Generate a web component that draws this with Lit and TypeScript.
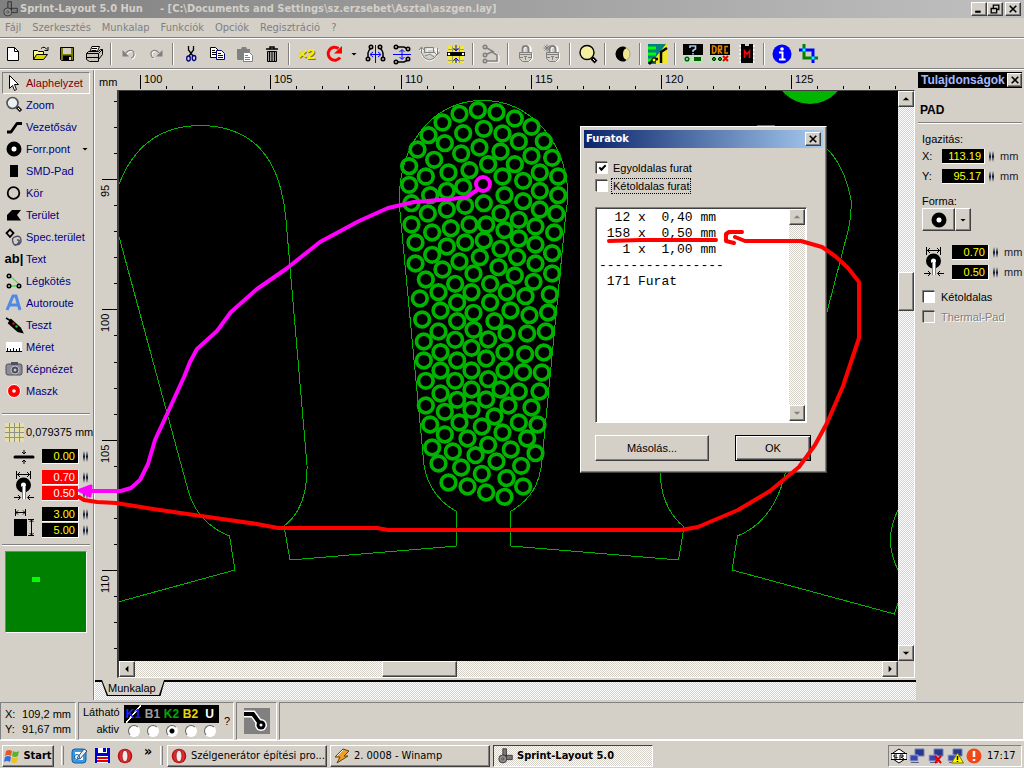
import { LitElement, html, svg, css, SVGTemplateResult } from "lit";
import { customElement } from "lit/decorators.js";

type Icon = SVGTemplateResult;

// Pads of the middle blade, stored as x,y pairs in thirds of a pixel.
const PADS: number[][] = (
  "292,59 237,70 348,65 403,84 186,96 453,109 144,134 248,128 310,115 366,129 415,153 490,152 111,177 193,158 " +
  "297,171 360,183 242,189 453,196 515,202 86,227 161,208 323,221 403,221 478,246 136,258 204,246 267,239 366,258 " +
  "533,258 86,283 428,271 199,301 248,289 478,301 149,314 372,314 533,314 93,338 310,338 428,332 199,357 254,346 " +
  "478,357 142,369 360,369 527,369 415,388 93,402 267,402 317,402 465,408 211,413 155,426 372,419 521,426 415,444 " +
  "105,456 254,456 310,450 199,468 465,462 360,475 155,493 298,500 515,488 410,500 237,513 105,519 465,519 186,537 " +
  "354,530 279,549 515,549 403,555 136,567 459,574 224,580 329,580 174,605 273,605 379,605 508,612 118,624 435,617 " +
  "230,636 329,636 180,660 279,667 390,660 447,674 503,666 125,687 230,692 342,692 174,723 279,718 378,729 440,729 " +
  "496,723 130,753 224,748 323,747 273,772 180,785 372,785 434,791 490,786 130,810 230,810 317,804 180,840 273,840 " +
  "372,840 428,845 484,846 323,866 136,871 224,871 273,897 360,897 415,903 477,903 180,909 230,928 317,927 136,945 " +
  "384,945 453,951 193,964 273,958 342,978 237,996 415,996 149,1002 304,1008 471,1002 366,1026 193,1032 261,1044 " +
  "440,1044 323,1063 155,1071 391,1077 217,1083 285,1094 465,1088 174,1119 348,1113 242,1131 422,1126 304,1150 " +
  "378,1163 204,1176 261,1188 428,1188 317,1206 372,1219"
).split(" ").map((p) => p.split(",").map(Number));

const ic = (body: Icon, size = 22) =>
  html`<svg class="icon" width=${size} height=${size} viewBox="0 0 22 22" aria-hidden="true">${body}</svg>`;

const lock = svg`<path d="M8 10V6q0-2.500 3.500-2.500T15 6v4" fill="none" stroke="#fff" stroke-width="3"/><path d="M7.500 10V6q0-3 3-3t3 3v4" fill="none" stroke="#808080" stroke-width="2"/><path d="M5 10h13v6l-3 3H8l-3-3z" fill="#fff"/><path d="M4.500 9.500h12v6l-3 3h-6l-3-3z" fill="#d4d0c8" stroke="#808080"/><path d="M5 11.500h11M5 14.500h3m5 0h3M10.500 13v4M9 13.500h3" stroke="#808080"/>`;
const dot = (x: number, y: number, c = "#000") => svg`<circle cx=${x} cy=${y} r="1.700" fill="#d4d0c8" stroke=${c} stroke-width="1.600"/>`;

const I: Record<string, Icon> = {
  neu: svg`<path d="M5.500 4.500h7l4 4v9h-11z" fill="#fff" stroke="#000"/><path d="M12.500 4.500v4h4" fill="none" stroke="#000"/>`,
  open: svg`<path d="M4.500 16.500v-9h4l1 1h5v3" fill="#ffff80" stroke="#000"/><path d="M4.500 16.500l3-5h11l-4 5z" fill="#d8d800" stroke="#000"/><path d="M12 5.500q3-3 6 1M19 4v3.500h-3.500" fill="none" stroke="#000"/>`,
  save: svg`<path d="M4.500 4.500h13v13h-12l-1-1z" fill="#808000" stroke="#000"/><path d="M7 5h8v6H7z" fill="#d4d0c8"/><path d="M7 12.500h8.500v5H7z" fill="#000"/><path d="M13 14h2v3h-2z" fill="#d4d0c8"/>`,
  print: svg`<path d="M6.500 9.500l2.500-6h7.500l-2.500 6" fill="#fff" stroke="#000"/><path d="M3.500 10.500l2-2h10l2-2h2v5l-4 5v2h-9l-3-2z" fill="#c8c4bc" stroke="#000"/><path d="M3.500 10.500h12v7M4 14.500h12M9 5.500h5M8.500 7.500h5M15.500 10.500l4-4" fill="none" stroke="#000"/><path d="M11 12h3v1h-3z" fill="#e0e000"/>`,
  undo: svg`<path d="M8.500 11.500q3-4 6-3t2.500 4-3 3.500" fill="none" stroke="#fff" stroke-width="1.200"/><path d="M7.500 10.500q3-4 6-3t2.500 4-3 3.500" fill="none" stroke="#808080" stroke-width="1.200"/><path d="M4.500 7v6.500H11z" fill="#808080"/>`,
  redo: svg`<path d="M15.500 11.500q-3-4-6-3T7 12.500t3 3.500" fill="none" stroke="#fff" stroke-width="1.200"/><path d="M14.500 10.500q-3-4-6-3T6 11.500t3 3.500" fill="none" stroke="#808080" stroke-width="1.200"/><path d="M17.500 7v6.500H11z" fill="#808080"/>`,
  cut: svg`<path d="M8.500 3v4l4.500 6M13.500 3v4L9 13" fill="none" stroke="#000" stroke-width="1.300"/><ellipse cx="8.500" cy="15.500" rx="1.800" ry="2.500" fill="none" stroke="#000080" stroke-width="1.300"/><ellipse cx="14" cy="15" rx="1.800" ry="2.500" fill="none" stroke="#000080" stroke-width="1.300"/>`,
  copy: svg`<path d="M3.500 4.500h5l3 3v7h-8z" fill="#fff" stroke="#000"/><path d="M5 7.500h3m-3 2h4m-4 2h4" stroke="#000"/><path d="M9.500 7.500h5l3 3v6h-8z" fill="#fff" stroke="#000080"/><path d="M11 10.500h3m-3 2h5m-5 2h5" stroke="#000080"/>`,
  paste: svg`<path d="M3 6h4l1-2h4l1 2h3v11H4l-1-1z" fill="#808080"/><path d="M9.500 9.500h6l3 3v6h-9z" fill="#fff" stroke="#808080"/><path d="M11 12.500h3m-3 2h5m-5 2h5" stroke="#808080"/>`,
  trash: svg`<path d="M5 6h12M9 6V4h4v2" fill="none" stroke="#000" stroke-width="1.500"/><path d="M6.500 8.500h9v10h-9z" fill="#a0a0a0" stroke="#000"/><path d="M8.500 9v9m2.500-9v9m2.500-9v9" stroke="#000"/>`,
  rot: svg`<path d="M15.500 5.500a6.500 6.500 0 1 0 1.500 9" fill="none" stroke="#f00" stroke-width="3"/><path d="M11 10.500h8V3z" fill="#f00"/>`,
  mirrorH: svg`<path d="M11.500 2v18" stroke="#00f"/><path d="M7 11.500h9M9 9l-3 2.500 3 2.500M14 9l3 2.500-3 2.500" fill="none" stroke="#00f"/><path d="M7 5q-3 3-3 5v5m12-10q3 3 3 5v5" fill="none" stroke="#000" stroke-width="1.500"/>${dot(7, 4)}${dot(4, 16)}${dot(16, 4)}${dot(19, 16)}`,
  mirrorV: svg`<path d="M2 11.500h18" stroke="#00f"/><path d="M11 7v9M8.500 9L11 6.500 13.500 9M8.500 14l2.500 2.500 2.500-2.500" fill="none" stroke="#00f"/><path d="M5 4h8l4 2M5 19h8l4-2" fill="none" stroke="#000" stroke-width="1.500"/>${dot(5, 4)}${dot(17, 6)}${dot(5, 19)}${dot(17, 16)}`,
  rotGrey: svg`<path d="M8 5h9v5H8zM3 5v7q8 10 15 0V5M1 7l2-3 2 3m11 0l2-3 2 3" fill="none" stroke="#fff" transform="translate(1 1)"/><path d="M6.500 4.500h9v5h-9zM3.500 5v5l3 5 5 2 5-2 3-4V5M1 7l2.500-3L6 7m10 2l3 3 2.500-3M7 13l5-2 4 3" fill="none" stroke="#808080"/>`,
  snap: svg`<path d="M3 3h16v17H3z" fill="#f0e840"/><path d="M3 6.500h16M3 17.500h16M7.500 3v17m7-17v17" stroke="#a0a060"/><path d="M2 11h18" stroke="#000" stroke-width="4"/><circle cx="4" cy="11" r="1.200" fill="#fff"/><circle cx="18" cy="11" r="1.200" fill="#fff"/><path d="M11 2v5M8.500 5L11 8l2.500-3M11 20v-5M8.500 17.500L11 15l2.500 2.500" fill="none" stroke="#00f"/>`,
  conn: svg`<path d="M5 4l8 4 5 4v6H6" fill="none" stroke="#fff" transform="translate(1 1)"/><path d="M5 4l8 4.500L5 12M12 9l5 3v6H6" fill="none" stroke="#808080" stroke-width="1.500"/>${dot(5, 4, "#808080")}${dot(5, 12, "#808080")}${dot(5, 18, "#808080")}`,
  lock,
  unlock: svg`${lock}<path d="M2.500 2.500l5 5m0-5l-5 5M5 1.500v7M1.500 5h7" stroke="#808080"/>`,
  find: svg`<circle cx="10" cy="9.500" r="7" fill="#f4f0a0" stroke="#000" stroke-width="1.400"/><path d="M15 15l4 4" stroke="#000" stroke-width="4"/><path d="M16 16l2 2" stroke="#fff"/>`,
  contrast: svg`<circle cx="11" cy="11" r="7" fill="#f0e890" stroke="#808060" stroke-width=".6"/><path d="M11 3.500a7.500 7.500 0 0 0 0 15q3 0 3-2-3-1-3-5.500t3-5.500q0-2-3-2z" fill="#000"/>`,
  photo: svg`<path d="M1 1h20v20H1z" fill="#f0e820"/><path d="M1 1h18L9 14v7H1z" fill="#008080"/><path d="M1 5h8m-8 6h8m-8 6h5" stroke="#0f0" stroke-width="3"/><path d="M21 3L9 16l1 5h11z" fill="#f0e820"/><path d="M20 5l-6 4v11M2 21l5-5h4" fill="none" stroke="#000" stroke-width="2.500"/><circle cx="7" cy="17" r="2" fill="#ff0" stroke="#000"/>`,
  help: svg`<path d="M1 1h20v11H1z"/><path d="M1 12h20v8H1z" fill="#c0e0c0"/><path d="M8 5V3h5.500v3L11 7.500V9m0 1v1.500" fill="none" stroke="#a6caf0" stroke-width="1.600"/><circle cx="5" cy="16" r="1.800" fill="none" stroke="#006000" stroke-width="1.500"/><path d="M12 14h7v4h-7z" fill="#006000"/>`,
  drc: svg`<path d="M1 1h20v11H1z"/><path d="M1 12h20v8H1z" fill="#c0e0c0"/><path d="M3.500 3v7h2l1.500-1.500v-4L5.500 3zM9.500 11V3h3v3.500h-3l3.500 4M19 3.500h-3v6.500h3" fill="none" stroke="#e08000" stroke-width="1.500"/><circle cx="5" cy="16" r="1.500" fill="#0c0" stroke="#000"/><circle cx="11" cy="16" r="1.500" fill="#0c0" stroke="#000"/><path d="M14 13l5 5m0-5l-5 5" stroke="#d00" stroke-width="2"/>`,
  macro: svg`<path d="M4.500 2v18m13-18v18" stroke="#fff" stroke-width="2" stroke-dasharray="2 2"/><path d="M5 1h4v2h4V1h4v19H5z"/><path d="M8.500 15V8l2.500 3 2.500-3v7" fill="none" stroke="#f00" stroke-width="1.600"/>`,
  info: svg`<circle cx="11" cy="11" r="9.500" fill="#00f"/><circle cx="11" cy="6" r="1.800" fill="#fff"/><path d="M8 9.500h3.500V16M8 16.500h6.500" fill="none" stroke="#fff" stroke-width="2"/>`,
  crop: svg`<path d="M6 1v14h14" fill="none" stroke="#008000" stroke-width="3"/><path d="M1 7h14v13" fill="none" stroke="#00f" stroke-width="3"/><path d="M4.500 5.500h3v3h-3zM13.500 13.500h3v3h-3z" fill="#0ff"/>`,
  // tool column
  arrow: svg`<path d="M6.500 3.500v13l3-3 2 5 2-1-2-5h4z" fill="#fff" stroke="#000"/>`,
  zoom: svg`<circle cx="9.500" cy="9" r="5.500" fill="#e8f0f0" stroke="#505050" stroke-width="1.600"/><path d="M14 13l4 4" stroke="#202020" stroke-width="3.500"/><path d="M15 14l2 2" stroke="#fff"/>`,
  track: svg`<path d="M4 16h4l6-8.500h5" fill="none" stroke="#000" stroke-width="2.800" stroke-linejoin="round"/>`,
  pad: svg`<circle cx="11" cy="11" r="5" fill="#fff" stroke="#000" stroke-width="5"/><circle cx="11" cy="11" r="2.200" fill="#fff"/>`,
  smd: svg`<path d="M7 5h8v12H7z"/>`,
  ring: svg`<circle cx="10.500" cy="11" r="5.800" fill="none" stroke="#000" stroke-width="1.800"/>`,
  area: svg`<path d="M9 6h9l-4 5 4 5.500H4V11z"/>`,
  spec: svg`<path d="M7 3.500L10.500 7 7 11 3.500 7z" fill="#d4d0c8" stroke="#000" stroke-width="1.800"/><path d="M11 18.500q7 1 7-4t-5-4-3 6 5 1-1-3.500" fill="none" stroke="#505068" stroke-width="1.500"/>`,
  lines: svg`<path d="M6 5l10 9M8 16h6" fill="none" stroke="#0d0"/>${dot(6, 6)}${dot(6, 16)}${dot(16, 16)}`,
  auto: svg`<path d="M4 18L10 4h3l4 14M7 13h8" fill="none" stroke="#5088e8" stroke-width="3"/>`,
  test: svg`<path d="M3 4l5 3" stroke="#000" stroke-width="1.500"/><path d="M8 6l9 8 2 4-4-1-9-8z" stroke="#000" stroke-width="2"/><circle cx="10.500" cy="9.500" r="1.200" fill="#f00"/><circle cx="13.500" cy="12.500" r="1.200" fill="#0d0"/>`,
  ruler: svg`<path d="M3 6h16v9H3z" fill="#fff"/><path d="M3 15.500h16M4.500 12v3m3-2v2m3-3v3m3-2v2m3-3v3" stroke="#000"/>`,
  camera: svg`<rect x="3" y="6" width="16" height="11" rx="2" fill="#8c8c94" stroke="#505060"/><path d="M8 4h7v3H8z" fill="#505060"/><circle cx="12" cy="12" r="4" fill="#484860" stroke="#c0c0d0"/><circle cx="12" cy="12" r="1.500" fill="#d0c8a0"/>`,
  mask: svg`<circle cx="11" cy="11" r="6.500" fill="#f00" stroke="#fff"/><circle cx="11" cy="11" r="1.800" fill="#fff"/>`,
  opera: svg`<ellipse cx="11" cy="11" rx="10" ry="10" fill="#b80c10"/><ellipse cx="11" cy="11" rx="8" ry="9" fill="#d83030"/><ellipse cx="11" cy="11" rx="4" ry="8" fill="#f4e8e8" stroke="#901010"/>`,
  lay: svg`<path d="M8 1h5v11H8zM12 10h9v6h-9z" fill="#787878" stroke="#202020"/><circle cx="8" cy="15" r="5.500" fill="#909090" stroke="#202020"/><circle cx="8" cy="15" r="1.500" fill="#d4d0c8" stroke="#202020"/>`,
  close: svg`<path d="M5 5l12 12M17 5L5 17" stroke="#000" stroke-width="3"/>`,
  min: svg`<path d="M4 16h10" stroke="#000" stroke-width="4"/>`,
  restore: svg`<path d="M8 9V4h10v8h-4" fill="none" stroke="#000" stroke-width="2.500"/><path d="M4 10h10v8H4z" fill="none" stroke="#000" stroke-width="2.500"/>`,
  up: svg`<path d="M4 14h14l-7-7z"/>`,
  down: svg`<path d="M4 8h14l-7 7z"/>`,
  left: svg`<path d="M14 4v14l-7-7z"/>`,
  right: svg`<path d="M8 4v14l7-7z"/>`,
};

const padSize = svg`<path d="M2.500 0v8m14-8v8M3 3.500h13M6 1L3.500 3.500 6 6m7-5l2.500 2.500L13 6" fill="none" stroke="#000"/><circle cx="9.500" cy="14" r="5" fill="#fff" stroke="#000" stroke-width="5"/><path d="M8 15h4v13H8z" fill="#fff"/><path d="M8.500 15v13m3-13v13" stroke="#808080"/><path d="M0 26.500h6M4 24l2.500 2.500L4 29M20 26.500h-6M16 24l-2.500 2.500L16 29" fill="none" stroke="#000"/>`;

const TOOLS: [string, string][] = [
  ["arrow", "Alaphelyzet"], ["zoom", "Zoom"], ["track", "Vezetősáv"], ["pad", "Forr.pont"], ["smd", "SMD-Pad"],
  ["ring", "Kör"], ["area", "Terület"], ["spec", "Spec.terület"], ["text", "Text"], ["lines", "Légkötés"],
  ["auto", "Autoroute"], ["test", "Teszt"], ["ruler", "Méret"], ["camera", "Képnézet"], ["mask", "Maszk"],
];

const BAR = "neu open save print | undo redo | cut copy paste trash | x2 rot v mirrorH mirrorV rotGrey snap | conn | lock unlock | find | contrast | photo | help drc macro | info crop".split(" ");

const HOLES = `  12 x  0,40 mm
 158 x  0,50 mm
   1 x  1,00 mm
----------------
 171 Furat`;

@customElement("app-root")
export class AppRoot extends LitElement {
  static styles = css`
    :host { display: flex; flex-direction: column; position: relative; min-height: 100vh; overflow: hidden; box-sizing: border-box; background: #d4d0c8; color: #000; font: 11px/14px "Liberation Sans", Arial, sans-serif; }
    *, *::before, *::after { box-sizing: border-box; }
    button, input, textarea { font: inherit; color: inherit; margin: 0; padding: 0; border-radius: 0; outline: 0; }
    button { border: 0; background: none; display: flex; align-items: center; justify-content: center; white-space: nowrap; }
    a { color: inherit; text-decoration: none; }
    svg { display: block; flex: none; }
    .tahoma { font-family: "DejaVu Sans Condensed", "DejaVu Sans", sans-serif; }
    .raised { background: #d4d0c8; border: 1px solid; border-color: #fff #404040 #404040 #fff; box-shadow: inset -1px -1px #808080; }
    .dither { background: repeating-conic-gradient(#fff 0 25%, #d4d0c8 0 50%) 0 0 / 2px 2px; }
    .fill { flex: 1; }

    .title { display: flex; align-items: center; height: 18px; padding: 0 3px 0 2px; background: linear-gradient(90deg, #808080, #c0c0c0); color: #d4d0c8; font-weight: bold; white-space: pre; }
    .title .name { margin-left: 2px; flex: 1; }
    .winbtn { width: 16px; height: 14px; }
    .winbtn + .winbtn + .winbtn { margin-left: 2px; }
    .menu { display: flex; height: 20px; align-items: center; padding: 0 5px; gap: 11px; color: #808080; border-bottom: 1px solid #808080; }
    .toolbar { display: flex; align-items: center; gap: 2px; height: 31px; border-top: 1px solid #fff; border-bottom: 1px solid #808080; }
    .toolbar button { width: 25px; height: 26px; }
    .toolbar .drop { width: 12px; }
    .x2 { color: #f4f000; font: bold 15px/20px "Liberation Sans", sans-serif; text-shadow: 1px 1px #807000; }
    .sep { width: 6px; height: 22px; display: flex; justify-content: center; }
    .sep::before { content: ""; width: 2px; border-left: 1px solid #808080; border-right: 1px solid #fff; }

    .main { display: flex; flex: 1; border-top: 1px solid #fff; }
    .side { width: 94px; padding: 2px 3px 0 2px; border-right: 1px solid #808080; display: flex; flex-direction: column; }
    .tool { width: 88px; height: 22px; justify-content: flex-start; color: #000080; border: 1px solid transparent; }
    .tool .name { margin-left: 1px; }
    .tool .more { margin-left: auto; }
    .tool .ab { width: 22px; font-weight: bold; font-size: 13px; color: #000; }
    .tool.on { color: #800000; border-color: #808080 #fff #fff #808080; }
    .rule { height: 2px; border-top: 1px solid #808080; border-bottom: 1px solid #fff; flex: none; }
    .side .rule:first-of-type { margin-top: 11px; }
    .gridrow { display: flex; align-items: center; gap: 2px; height: 34px; padding-left: 3px; white-space: nowrap; }
    .params { display: flex; gap: 5px; align-items: center; padding-left: 8px; margin-bottom: 6px; }
    .params svg { width: 27px; }
    .stack { display: flex; flex-direction: column; gap: 1px; }
    .field { display: flex; align-items: center; gap: 4px; }
    .num { width: 37px; height: 15px; padding: 0 3px; border: 0; border-right: 1px solid #fff; border-bottom: 1px solid #fff; background: #000; color: #ff0; text-align: right; }
    .num.hot { background: #f00; color: #fff; }
    .num.wide { width: 43px; }
    .spin { width: 5px; height: 11px; background: linear-gradient(90deg, transparent 40%, #d4d0c8 0 60%, transparent 0), linear-gradient(#d4d0c8, #101830, #d4d0c8); }
    .overview { width: 82px; height: 82px; margin: 5px 0 0 3px; background: #008000; border: 1px solid; border-color: #808080 #fff #fff #808080; }

    .work { flex: 1; min-width: 0; display: grid; grid-template-columns: 22px minmax(0, 1fr); grid-template-rows: 20px minmax(0, 1fr) auto; border-left: 1px solid #fff; }
    .unit { padding: 5px 0 0 4px; }
    .top, .vert { overflow: hidden; }
    .top svg, .vert svg, .board svg { width: 100%; height: 100%; }
    .canvasbox { display: grid; grid-template-columns: minmax(0, 1fr) 16px; grid-template-rows: minmax(0, 1fr) 16px; border: 1px solid; border-color: #404040 #fff #fff #404040; margin: 0 1px 2px 0; border-left-width: 2px; }
    .board { background: #000; overflow: hidden; }
    .vscroll, .hscroll { display: flex; }
    .vscroll { flex-direction: column; }
    .sb { width: 16px; height: 16px; flex: none; }
    .vthumb { height: 39px; }
    .hthumb { width: 75px; }
    .tabs { grid-column: 1 / -1; height: 20px; border-top: 2px solid #000; padding-left: 6px; }
    .tab { width: 64px; height: 16px; margin-top: -2px; background: #000; clip-path: polygon(0 0, 100% 0, 93% 100%, 9% 100%); }
    .tab span { display: block; height: 15px; padding-left: 7px; line-height: 16px; background: #d4d0c8; clip-path: polygon(1px 0, 63px 0, 58px 100%, 7px 100%); }

    .props { width: 108px; padding: 2px 2px 0; }
    .props header { display: flex; align-items: center; height: 16px; background: #000; color: #a6b8ff; padding-left: 3px; font-size: 12px; font-weight: bold; justify-content: space-between; }
    .props .winbtn { width: 15px; }
    .props h2 { margin: 14px 0 4px 2px; font-size: 12px; line-height: 16px; }
    .props .body { padding: 8px 0 0 4px; display: flex; flex-direction: column; }
    .props .row { display: flex; align-items: center; height: 20px; gap: 4px; }
    .props .row label { width: 16px; flex: none; }
    .props .mm { margin-left: 2px; color: #202030; }
    .props .lead { height: 14px; }
    .props .forma { margin-top: 8px; }
    .combo { display: flex; margin-bottom: 11px; }
    .combo button { height: 23px; width: 33px; }
    .combo .dd { width: 16px; }
    .sizes { display: flex; gap: 8px; align-items: center; }
    .check { display: flex; align-items: center; gap: 6px; height: 20px; white-space: nowrap; }
    .check input { appearance: none; width: 12px; height: 12px; flex: none; background: #fff; border: 1px solid; border-color: #404040 #fff #fff #404040; box-shadow: -1px -1px #808080; margin-left: 1px; display: grid; place-content: center; }
    .check input:checked::before { content: ""; width: 7px; height: 4px; border: solid #000; border-width: 0 0 2px 2px; transform: translateY(-1px) rotate(-45deg); }
    .props .first { margin-top: 5px; }
    .off { color: #808080; text-shadow: 1px 1px #fff; }
    .check.off input { background: #d4d0c8; }

    .status { display: flex; gap: 2px; height: 38px; margin-top: 2px; }
    .cell { border: 1px solid; border-color: #808080 #fff #fff #808080; }
    .pos { width: 76px; padding: 4px; display: grid; grid-template-columns: 14px 1fr; line-height: 15px; text-align: right; }
    .pos span:nth-child(odd) { text-align: left; }
    .layers { width: 156px; display: flex; align-items: center; gap: 5px; padding-left: 4px; }
    .caps { width: 36px; text-align: right; line-height: 17px; }
    .lay { display: grid; grid-template-columns: repeat(5, 19px); justify-items: center; }
    .names { background: #000; height: 18px; font: bold 12px/18px "Liberation Sans", sans-serif; }
    .names .k1 { background: linear-gradient(to top left, transparent 46%, #fff 47% 53%, transparent 54%); }
    .k1 { color: #2020ff; } .b1 { color: #a0a0a0; } .k2 { color: #00a800; } .b2 { color: #e8d800; } .u { color: #fff; }
    .lay input { appearance: none; width: 12px; height: 12px; margin-top: 2px; border-radius: 50%; border: 1px solid; border-color: #606060 #fff #fff #606060; background: #fff; }
    .lay input:checked { background: radial-gradient(circle, #000 2px, #fff 3px); }
    .via { width: 41px; display: flex; align-items: center; justify-content: center; }

    .taskbar { display: flex; align-items: center; height: 28px; padding: 2px 2px 0; border-top: 1px solid #fff; }
    .start { width: 52px; height: 22px; font-weight: bold; gap: 3px; }
    .grip { width: 3px; height: 19px; border-left: 1px solid #fff; border-right: 1px solid #808080; margin: 0 7px; }
    .quick { display: flex; gap: 6px; align-items: center; }
    .chev { font-size: 14px; font-weight: bold; line-height: 16px; width: 20px; padding-left: 11px; align-self: flex-start; }
    .chev + .grip { margin-right: 4px; }
    .tasks { display: flex; gap: 3px; flex: 1; }
    .task { width: 160px; height: 22px; justify-content: flex-start; padding: 0 3px; gap: 4px; overflow: hidden; }
    .task.active { border: 1px solid; border-color: #404040 #fff #fff #404040; font-weight: bold; }
    .tray { display: flex; align-items: center; gap: 2px; width: 134px; height: 22px; padding: 0 2px; }
    .tray time { margin-left: 3px; }

    .dialog { position: absolute; left: 580px; top: 126px; width: 247px; padding: 3px; }
    .dialog header { display: flex; align-items: center; height: 18px; padding: 0 2px; background: linear-gradient(90deg, #0a246a, #a6caf0); color: #fff; font-weight: bold; justify-content: space-between; }
    .dialog .in { padding: 11px 12px 8px 11px; }
    .dialog .check { height: 18px; gap: 3px; }
    .dialog .check span { padding: 0 1px; line-height: 14px; border: 1px solid transparent; }
    .dialog .check .focus { border: 1px dotted #000; }
    .memo { display: flex; width: 212px; height: 216px; margin: 12px 0 12px; background: #fff; border: 1px solid; border-color: #808080 #fff #fff #808080; box-shadow: inset 1px 1px #404040; padding: 1px; }
    .memo textarea { flex: 1; min-width: 0; border: 0; background: none; resize: none; overflow: hidden; padding: 1px 2px; font: 13px/16px "Liberation Mono", "Courier New", monospace; white-space: pre; }
    .memo .vscroll { width: 16px; }
    .memo svg { fill: #808080; }
    .actions { display: flex; justify-content: space-between; }
    .actions button { height: 26px; width: 114px; }
    .actions .ok { width: 76px; border-color: #000; box-shadow: inset 1px 1px #fff, inset -1px -1px #404040, inset -2px -2px #808080; }
    .ink { position: absolute; left: 0; top: 0; width: 100%; height: 100%; pointer-events: none; fill: none; stroke-linejoin: round; stroke-linecap: round; }
    .scale { font: 11px "Liberation Sans", Arial, sans-serif; }
  `;

  private num(id: string, label: string, value: string, extra = "") {
    return html`<span class="field"><input class="num ${extra}" id=${id} aria-label=${label} .value=${value} /><span class="spin"></span></span>`;
  }

  private ticks(start: number, count: number, majorAt: number, vertical: boolean) {
    return Array.from({ length: count }, (_, i) => {
      const p = start + Math.round(i * 26.05);
      const major = (i - majorAt) % 5 === 0;
      return vertical
        ? svg`<path d="M${major ? 7 : 19} ${p + 0.5}H22" stroke="#000"/>`
        : svg`<path d="M${p + 0.5} ${major ? 5 : 16}V19" stroke="#000"/>`;
    });
  }

  private barItem(name: string) {
    if (name === "|") return html`<span class="sep"></span>`;
    if (name === "v") return html`<button class="drop" aria-label="Forgatás szöge">${ic(I.down, 8)}</button>`;
    if (name === "x2") return html`<button><span class="x2">×2</span></button>`;
    return html`<button aria-label=${name}>${ic(I[name])}</button>`;
  }

  private board() {
    return html`<svg aria-label="Munkalap"><g transform="translate(-119 -91)">
      <g fill="none" stroke="#00b400" stroke-width="1" shape-rendering="crispEdges">
        <path d="M118 187Q140 126 200 125.500Q265 126 281 190Q285 205 286 220L307 465Q308 508 284 526L290 560L456.500 546V511.500C436 500 427 484 424 465L400 212C394 150 430 100 483 100.500C540 100 576 160 566 212L542 460C540 485 530 500 510.500 511.500V546L678.500 560L684 527Q658 505 660.500 465L682 220Q690 126 767 125.500Q838 128 851 200Q852 215 848 231L784 478Q772 522 737.500 536L732 570L894.500 614L899 600"/>
        <path d="M118 233L188 490Q197 523 229.500 536L235 570L118 602M899 508Q882 540 899 572"/>
      </g>
      <circle cx="810" cy="68" r="36" fill="#00b400"/>
      <g transform="translate(380.500 90.500) scale(.3333)" fill="none" stroke="#00b400" stroke-width="11">
        ${PADS.map(([x, y]) => svg`<circle cx=${x} cy=${y} r="22"/>`)}
      </g>
    </g></svg>`;
  }

  render() {
    const h = [100, 105, 110, 115, 120, 125];
    const v = [95, 100, 105, 110];
    return html`
      <header class="title tahoma">
        ${ic(I.lay, 16)}<span class="name">Sprint-Layout 5.0 Hun     - [C:\\Documents and Settings\\sz.erzsebet\\Asztal\\aszgen.lay]</span>
        <button class="winbtn raised" aria-label="Kis méret">${ic(I.min, 12)}</button>
        <button class="winbtn raised" aria-label="Előző méret">${ic(I.restore, 12)}</button>
        <button class="winbtn raised" aria-label="Bezárás">${ic(I.close, 12)}</button>
      </header>
      <nav class="menu tahoma">
        ${["Fájl", "Szerkesztés", "Munkalap", "Funkciók", "Opciók", "Regisztráció", "?"].map((m) => html`<a href="#">${m}</a>`)}
      </nav>
      <div class="toolbar">${BAR.map((n) => this.barItem(n))}</div>

      <div class="main">
        <aside class="side">
          ${TOOLS.map(([k, label], i) => html`<button class="tool ${i === 0 ? "on" : ""}">
            ${k === "text" ? html`<span class="ab">ab|</span>` : ic(I[k])}<span class="name">${label}</span>
            ${k === "pad" ? html`<span class="more">${ic(I.down, 8)}</span>` : ""}</button>`)}
          <div class="rule"></div>
          <div class="gridrow">
            <svg width="19" height="19"><path d="M0 0h19v19H0z" fill="#e4e0a8"/><path d="M0 4.500h19M0 9.500h19M0 14.500h19M4.500 0v19M9.500 0v19M14.500 0v19" stroke="#909090"/></svg>
            <span>0,079375 mm</span>
          </div>
          <div class="params">
            <svg width="27" height="14"><path d="M5 7h18" stroke="#000" stroke-width="3" stroke-linecap="round"/><path d="M14 0v4m-2-2l2 2 2-2M14 14v-4m-2 2l2-2 2 2" fill="none" stroke="#000"/></svg>
            ${this.num("w", "Sávszélesség", "0.00")}
          </div>
          <div class="params">
            <svg width="27" height="30"><g transform="translate(4 0)">${padSize}</g></svg>
            <div class="stack">${this.num("po", "Forrpont külső átmérő", "0.70", "hot")}${this.num("pi", "Forrpont furat", "0.50", "hot")}</div>
          </div>
          <div class="params">
            <svg width="27" height="28"><path d="M5.500 0v7m10-7v7M6 3.500h9M8 1.500l-2 2 2 2m5-4l2 2-2 2M18 10.500h6m-6 16h6M21.500 11v15m-2-13l2-2 2 2m-4 11l2 2 2-2" fill="none" stroke="#000"/><path d="M4 10h13v17H4z"/></svg>
            <div class="stack">${this.num("sx", "SMD szélesség", "3.00")}${this.num("sy", "SMD magasság", "5.00")}</div>
          </div>
          <div class="rule"></div>
          <svg class="overview"><path d="M26 25h8v5h-8z" fill="#0f0"/></svg>
        </aside>

        <section class="work">
          <div class="unit">mm</div>
          <div class="top"><svg class="scale">${this.ticks(23, 30, 0, false)}${h.map((n, i) => svg`<text x=${27 + Math.round(i * 130.25)} y="13">${n}</text>`)}</svg></div>
          <div class="vert"><svg class="scale">${this.ticks(11, 22, 3, true)}${v.map((n, i) => svg`<text transform="translate(14 ${(i ? 112 : 107) + Math.round(i * 130.25)}) rotate(-90)">${n}</text>`)}</svg></div>
          <div class="canvasbox">
            <div class="board">${this.board()}</div>
            <div class="vscroll dither">
              <button class="sb raised" aria-label="Fel">${ic(I.up, 10)}</button><span class="fill" style="flex-grow:165"></span>
              <span class="vthumb raised"></span><span class="fill" style="flex-grow:334"></span>
              <button class="sb raised" aria-label="Le">${ic(I.down, 10)}</button>
            </div>
            <div class="hscroll dither">
              <button class="sb raised" aria-label="Balra">${ic(I.left, 10)}</button><span class="fill" style="flex-grow:247"></span>
              <span class="hthumb raised"></span><span class="fill" style="flex-grow:425"></span>
              <button class="sb raised" aria-label="Jobbra">${ic(I.right, 10)}</button>
            </div>
          </div>
          <div class="tabs dither"><div class="tab"><span>Munkalap</span></div></div>
        </section>

        <aside class="props">
          <header>Tulajdonságok<button class="winbtn raised" aria-label="Bezárás">${ic(I.close, 12)}</button></header>
          <h2>PAD</h2>
          <div class="rule"></div>
          <div class="body">
            <div class="lead">Igazitás:</div>
            <div class="row"><label for="px">X:</label>${this.num("px", "X", "113.19", "wide")}<span class="mm">mm</span></div>
            <div class="row"><label for="py">Y:</label>${this.num("py", "Y", "95.17", "wide")}<span class="mm">mm</span></div>
            <div class="lead forma">Forma:</div>
            <div class="combo"><button class="raised" aria-label="Kör alakú forrpont">${ic(I.pad)}</button><button class="dd raised" aria-label="Forma választása">${ic(I.down, 8)}</button></div>
            <div class="sizes">
              <svg width="22" height="30"><g transform="translate(2 0)">${padSize}</g></svg>
              <div>
                <div class="row">${this.num("qo", "Külső átmérő", "0.70")}<span class="mm">mm</span></div>
                <div class="row">${this.num("qi", "Furat", "0.50")}<span class="mm">mm</span></div>
              </div>
            </div>
            <label class="check first"><input type="checkbox" />Kétoldalas</label>
            <label class="check off"><input type="checkbox" disabled />Thermal-Pad</label>
          </div>
        </aside>
      </div>

      <footer class="status">
        <div class="cell pos"><span>X:</span><span>109,2 mm</span><span>Y:</span><span>91,67 mm</span></div>
        <div class="cell layers">
          <div class="caps">Látható<br />aktiv</div>
          <div>
            <div class="lay names">${["K1", "B1", "K2", "B2", "U"].map((n) => html`<label class=${n.toLowerCase()} for="l-${n}">${n}</label>`)}</div>
            <div class="lay">${["K1", "B1", "K2", "B2", "U"].map((n) => html`<input type="radio" name="layer" id="l-${n}" .checked=${n === "K2"} />`)}</div>
          </div>
          <span>?</span>
        </div>
        <div class="cell via"><svg width="26" height="26"><path d="M0 0h26v26H0z" fill="#808080"/><path d="M0 6h9l8 11" fill="none" stroke="#fff" stroke-width="7"/><circle cx="17" cy="17" r="6" fill="#fff"/><path d="M0 6h9l8 11" fill="none" stroke="#000" stroke-width="4"/><circle cx="17" cy="17" r="4.500" fill="#000"/><circle cx="17" cy="17" r="1.500" fill="#fff"/></svg></div>
        <div class="cell fill"></div>
      </footer>

      <footer class="taskbar tahoma">
        <button class="start raised"><svg width="16" height="16"><path d="M2 3q3-2 6 0l-1 5q-3-2-6 0z" fill="#e85820"/><path d="M9 3q3 2 6 0l-1 5q-3 2-6 0z" fill="#60b030"/><path d="M1 9q3-2 6 0l-1 5q-3-2-6 0z" fill="#3070e0"/><path d="M8 9q3 2 6 0l-1 5q-3 2-6 0z" fill="#f0c020"/></svg>Start</button>
        <span class="grip"></span>
        <div class="quick">
          <svg width="17" height="17"><rect x="1" y="2" width="14" height="14" rx="3" fill="#3898e0" stroke="#1060a8"/><path d="M4 5h8v8H4z" fill="#fff"/><path d="M6 11l7-9 3 2-7 8z" fill="#f0f0f0" stroke="#305070"/><circle cx="6" cy="10" r="2.500" fill="none" stroke="#1060a8"/></svg>
          <svg width="17" height="17"><path d="M1 1h15v15H1z" fill="#0000d0"/><path d="M4 1h9v5H4z" fill="#fff"/><path d="M9 1h3v4H9z" fill="#0000d0"/><path d="M3 9h11v7H3z" fill="#fff"/><path d="M3 11h11m-11 3h11" stroke="#e00000" stroke-width="2"/></svg>
          ${ic(I.opera, 16)}
        </div>
        <span class="chev">»</span><span class="grip"></span>
        <div class="tasks">
          <button class="task raised">${ic(I.opera, 16)}Szélgenerátor építési pro...</button>
          <button class="task raised"><svg width="16" height="16"><path d="M9 1l6 2-5 5h4L3 15l3-6H1z" fill="#f0a020" stroke="#604010"/><path d="M9 2L3 8" stroke="#fff"/></svg>2. 0008 - Winamp</button>
          <button class="task active dither">${ic(I.lay, 16)}Sprint-Layout 5.0</button>
        </div>
        <div class="tray cell">
          <svg width="16" height="16"><path d="M2 5l6-4 6 4M2 11l6 4 6-4" fill="#fff" stroke="#000"/><path d="M0 5.500h16v6H0z" fill="#fff" stroke="#000"/><path d="M6 7H3v2h3v1H3m6 1V7h3v2h-2l3 2" fill="none" stroke="#000"/></svg>
          ${[0, 1, 2].map((k) => html`<svg width="17" height="16"><path d="M6 1h9v7H6z" fill="#283890" stroke="#7080b0"/><path d="M1 7h8v6H1z" fill="#3848b0" stroke="#a0a8d0"/><path d="M2 14.500h8" stroke="#606080"/>${k === 1 ? svg`<path d="M7 8l6 7m0-7l-6 7" stroke="#e00000" stroke-width="2"/>` : k === 2 ? svg`<path d="M10.500 5l6 10h-12z" fill="#ff0" stroke="#807000"/><path d="M10.500 8v4m0 1v1" stroke="#000" stroke-width="1.500"/>` : ""}</svg>`)}
          <svg width="16" height="16"><circle cx="8" cy="8" r="7.500" fill="#f04818"/><path d="M8 3v6m0 2v2" stroke="#fff" stroke-width="2.500"/></svg>
          <time>17:17</time>
        </div>
      </footer>

      <section class="dialog raised" role="dialog" aria-label="Furatok">
        <header class="tahoma">Furatok<button class="winbtn raised" aria-label="Bezárás">${ic(I.close, 12)}</button></header>
        <div class="in">
          <label class="check"><input type="checkbox" checked /><span>Egyoldalas furat</span></label>
          <label class="check"><input type="checkbox" /><span class="focus">Kétoldalas furat</span></label>
          <div class="memo">
            <textarea readonly aria-label="Furatok listája" .value=${HOLES}></textarea>
            <div class="vscroll dither">
              <button class="sb raised" aria-label="Fel">${ic(I.up, 10)}</button><span class="fill"></span>
              <button class="sb raised" aria-label="Le">${ic(I.down, 10)}</button>
            </div>
          </div>
          <div class="actions"><button class="raised">Másolás...</button><button class="ok raised">OK</button></div>
        </div>
      </section>

      <svg class="ink" aria-hidden="true">
        <g stroke="#f0f" stroke-width="4">
          <circle cx="483" cy="184" r="7"/>
          <path d="M477 190L467 197L451 199L414 202L388 208L359 221L320 242L286 269L257 289L231 312L217 331L197 349L190 362L184 377L168 412L155 440L148 464L140 480L131 488L121 491L84 491"/>
          <path d="M91 486L79 490.500L90 496Z" stroke-width="3" fill="#f0f"/>
        </g>
        <g stroke="#f00" stroke-width="4">
          <path d="M79 497L84 500L97 502L116 503L153 509L215 518L257 524L278 528L377 528L388 530L681 530L698 527L712 521L738 510L770 491L799 467L815 445L827 423L837 400L843 386L854 353L859 338L859 282L848 268L835 256L822 247L801 241L745 241L735 237"/>
          <path d="M742 232H729L726 234V241L734 243M609 241L640 240H716"/>
        </g>
      </svg>
    `;
  }
}
